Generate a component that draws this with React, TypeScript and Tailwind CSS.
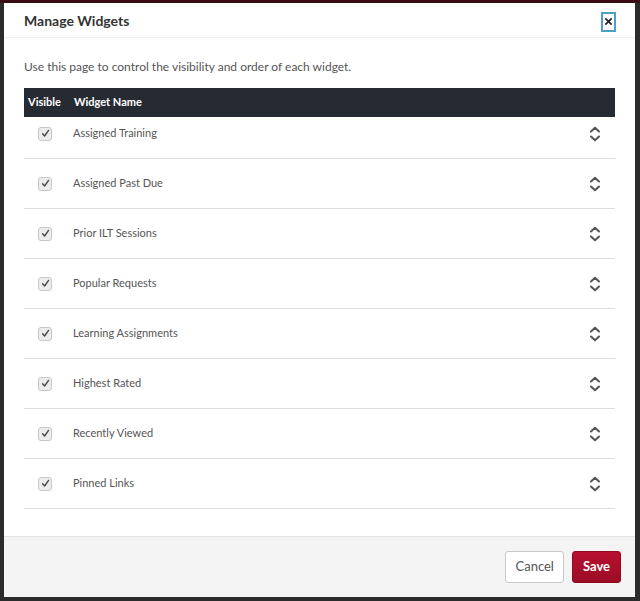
import { useState } from "react";

const widgets = [
    "Assigned Training",
    "Assigned Past Due",
    "Prior ILT Sessions",
    "Popular Requests",
    "Learning Assignments",
    "Highest Rated",
    "Recently Viewed",
    "Pinned Links",
];

function Check({ checked, onClick }: { checked: boolean; onClick: () => void }) {
    return (
        <button
            type="button"
            onClick={onClick}
            className="w-[14px] h-[14px] rounded-[3px] border border-[#c8c8c8] bg-[#ececec] flex items-center justify-center"
        >
            {checked && (
                <svg viewBox="0 0 10 10" className="w-[9px] h-[9px]">
                    <path d="M1.8 5.4 L4 7.8 L8.4 1.6" fill="none" stroke="#4a4a4a" strokeWidth="1.6" strokeLinecap="round" strokeLinejoin="round" />
                </svg>
            )}
        </button>
    );
}

function Sorter() {
    return (
        <svg viewBox="0 0 12 16" className="w-[12px] h-[16px]">
            <path d="M2 5.5 L6 1.8 L10 5.5" fill="none" stroke="#555" strokeWidth="2" strokeLinecap="round" strokeLinejoin="round" />
            <path d="M2 10.5 L6 14.2 L10 10.5" fill="none" stroke="#555" strokeWidth="2" strokeLinecap="round" strokeLinejoin="round" />
        </svg>
    );
}

export default function App() {
    const [visible, setVisible] = useState<boolean[]>(widgets.map(() => true));

    return (
        <div className="min-h-screen bg-[#2b2b2b] flex flex-col" style={{ fontFamily: "Lato, 'Open Sans', sans-serif" }}>
            <div className="h-[3px] bg-[#3a0c14]"></div>
            <div className="ml-[4px] mr-[5px] mb-[4px] h-[594px] bg-white flex flex-col">
                <div className="h-[35px] flex items-center justify-between pl-[20px] pr-[19px] border-b border-[#f0f0f0]">
                    <h1 className="text-[14px] font-bold text-[#333]">Manage Widgets</h1>
                    <button className="w-[15px] h-[20px] mt-[3px] border-2 border-[#4aa0c8] flex items-center justify-center text-[#222]">
                        <svg viewBox="0 0 10 10" className="w-[9px] h-[9px]">
                            <path d="M1.5 1.5 L8.5 8.5 M8.5 1.5 L1.5 8.5" stroke="#222" strokeWidth="1.8" />
                        </svg>
                    </button>
                </div>
                <div className="flex-1 px-[20px] pt-[21px]">
                    <p className="text-[12px] text-[#555] leading-[16px]">Use this page to control the visibility and order of each widget.</p>
                    <div className="mt-[13px] h-[29px] bg-[#262b33] flex items-center text-white text-[11px] font-bold">
                        <span className="pl-[4px] w-[50px]">Visible</span>
                        <span>Widget Name</span>
                    </div>
                    {widgets.map((w, i) => (
                        <div
                            key={w}
                            className={`${i === 0 ? "h-[42px] pb-2" : "h-[50px]"} flex items-center border-b border-[#dedede] text-[11px] text-[#555]`}
                        >
                            <div className="w-[49px] flex justify-start pl-[14px]">
                                <Check checked={visible[i]} onClick={() => setVisible(visible.map((v, j) => (j === i ? !v : v)))} />
                            </div>
                            <span className="flex-1">{w}</span>
                            <div className="pr-[14px] flex items-center">
                                <Sorter />
                            </div>
                        </div>
                    ))}
                </div>
                <div className="h-[61px] bg-[#f4f4f4] border-t border-[#e4e4e4] flex items-center justify-end gap-[8px] pr-[14px]">
                    <button className="h-[32px] px-[9px] rounded-[3px] border border-[#c9c9c9] bg-white text-[13px] text-[#555]">Cancel</button>
                    <button className="h-[32px] px-[10px] rounded-[3px] border border-[#8e0b22] bg-gradient-to-b from-[#b8112f] to-[#9b0c25] text-[13px] font-bold text-white">Save</button>
                </div>
            </div>
        </div>
    );
}
